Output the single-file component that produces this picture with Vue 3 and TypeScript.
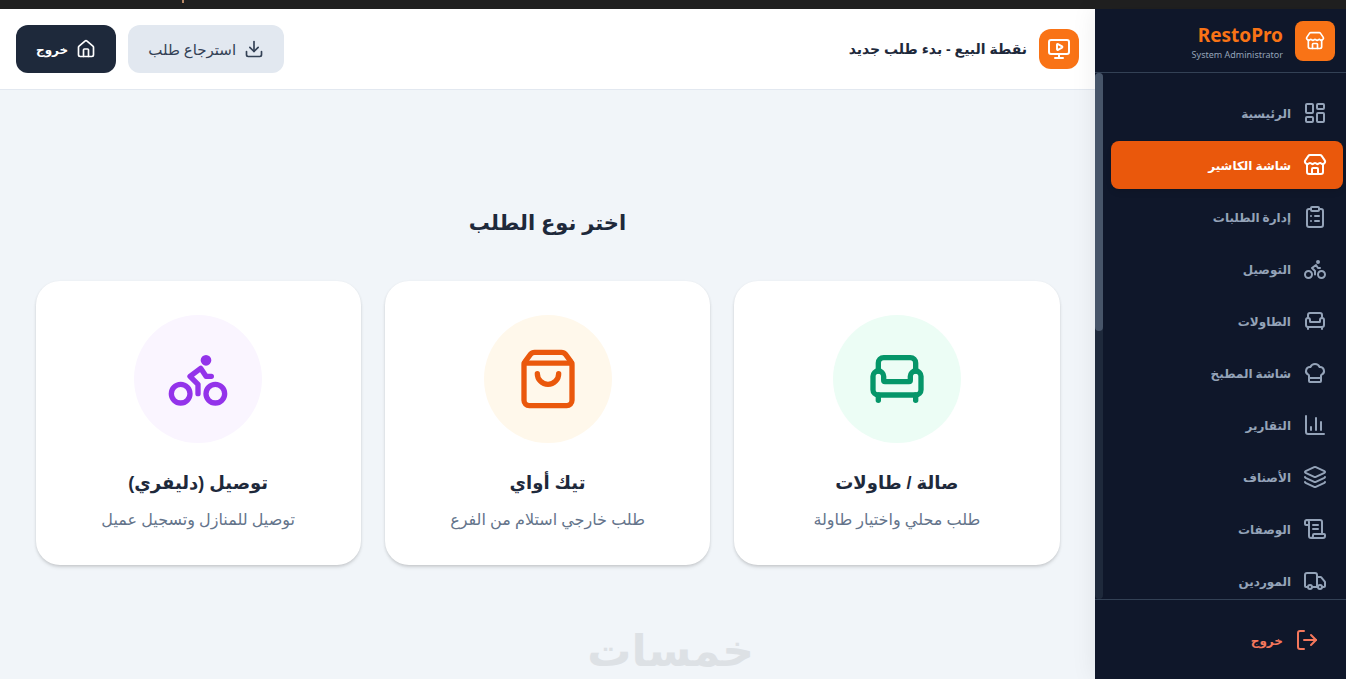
<script setup lang="ts">
interface NavItem {
  label: string
  icon: string
  active?: boolean
}

interface OrderType {
  title: string
  text: string
  icon: string
  tone: string
}

const icons: Record<string, string[]> = {
  dashboard: [
    'M4 3h5a1 1 0 0 1 1 1v7a1 1 0 0 1-1 1H4a1 1 0 0 1-1-1V4a1 1 0 0 1 1-1z',
    'M15 3h5a1 1 0 0 1 1 1v3a1 1 0 0 1-1 1h-5a1 1 0 0 1-1-1V4a1 1 0 0 1 1-1z',
    'M15 12h5a1 1 0 0 1 1 1v7a1 1 0 0 1-1 1h-5a1 1 0 0 1-1-1v-7a1 1 0 0 1 1-1z',
    'M4 16h5a1 1 0 0 1 1 1v3a1 1 0 0 1-1 1H4a1 1 0 0 1-1-1v-3a1 1 0 0 1 1-1z',
  ],
  store: [
    'M15 21v-5a1 1 0 0 0-1-1h-4a1 1 0 0 0-1 1v5',
    'M17.774 10.31a1.12 1.12 0 0 0-1.549 0 2.5 2.5 0 0 1-3.451 0 1.12 1.12 0 0 0-1.548 0 2.5 2.5 0 0 1-3.452 0 1.12 1.12 0 0 0-1.549 0 2.5 2.5 0 0 1-3.77-3.248l2.889-4.184A2 2 0 0 1 7 2h10a2 2 0 0 1 1.653.873l2.895 4.192a2.5 2.5 0 0 1-3.774 3.244',
    'M4 10.95V19a2 2 0 0 0 2 2h12a2 2 0 0 0 2-2v-8.05',
  ],
  clipboard: [
    'M9 2h6a1 1 0 0 1 1 1v2a1 1 0 0 1-1 1H9a1 1 0 0 1-1-1V3a1 1 0 0 1 1-1z',
    'M16 4h2a2 2 0 0 1 2 2v14a2 2 0 0 1-2 2H6a2 2 0 0 1-2-2V6a2 2 0 0 1 2-2h2',
    'M12 11h4', 'M12 16h4', 'M8 11h.01', 'M8 16h.01',
  ],
  bike: [
    'M15 17.5a3.5 3.5 0 1 0 7 0a3.5 3.5 0 1 0-7 0',
    'M2 17.5a3.5 3.5 0 1 0 7 0a3.5 3.5 0 1 0-7 0',
    'M14 5a1 1 0 1 0 2 0a1 1 0 1 0-2 0',
    'M12 17.5V14l-3-3 4-3 2 3h2',
  ],
  armchair: [
    'M19 9V6a2 2 0 0 0-2-2H7a2 2 0 0 0-2 2v3',
    'M3 16a2 2 0 0 0 2 2h14a2 2 0 0 0 2-2v-5a2 2 0 0 0-4 0v1.5a.5.5 0 0 1-.5.5h-9a.5.5 0 0 1-.5-.5V11a2 2 0 0 0-4 0z',
    'M5 18v2', 'M19 18v2',
  ],
  chef: [
    'M17 21a1 1 0 0 0 1-1v-5.35c0-.457.316-.844.727-1.041a4 4 0 0 0-2.134-7.589 5 5 0 0 0-9.186 0 4 4 0 0 0-2.134 7.588c.411.198.727.585.727 1.041V20a1 1 0 0 0 1 1Z',
    'M6 17h12',
  ],
  chart: ['M3 3v16a2 2 0 0 0 2 2h16', 'M18 17V9', 'M13 17V5', 'M8 17v-3'],
  layers: [
    'M12.83 2.18a2 2 0 0 0-1.66 0L2.6 6.08a1 1 0 0 0 0 1.83l8.58 3.91a2 2 0 0 0 1.66 0l8.58-3.9a1 1 0 0 0 0-1.83z',
    'M2 12a1 1 0 0 0 .58.91l8.6 3.91a2 2 0 0 0 1.65 0l8.58-3.9A1 1 0 0 0 22 12',
    'M2 17a1 1 0 0 0 .58.91l8.6 3.91a2 2 0 0 0 1.65 0l8.58-3.9A1 1 0 0 0 22 17',
  ],
  scroll: [
    'M15 12h-5', 'M15 8h-5', 'M19 17V5a2 2 0 0 0-2-2H4',
    'M8 21h12a2 2 0 0 0 2-2v-1a1 1 0 0 0-1-1H11a1 1 0 0 0-1 1v1a2 2 0 1 1-4 0V5a2 2 0 1 0-4 0v2a1 1 0 0 0 1 1h3',
  ],
  truck: [
    'M14 18V6a2 2 0 0 0-2-2H4a2 2 0 0 0-2 2v11a1 1 0 0 0 1 1h2',
    'M15 18H9',
    'M19 18h2a1 1 0 0 0 1-1v-3.65a1 1 0 0 0-.22-.624l-3.48-4.35A1 1 0 0 0 17.52 8H14',
    'M15 18a2 2 0 1 0 4 0a2 2 0 1 0-4 0',
    'M5 18a2 2 0 1 0 4 0a2 2 0 1 0-4 0',
  ],
  house: [
    'M15 21v-8a1 1 0 0 0-1-1h-4a1 1 0 0 0-1 1v8',
    'M3 10a2 2 0 0 1 .709-1.528l7-5.999a2 2 0 0 1 2.582 0l7 5.999A2 2 0 0 1 21 10v9a2 2 0 0 1-2 2H5a2 2 0 0 1-2-2z',
  ],
  download: ['M12 15V3', 'M21 15v4a2 2 0 0 1-2 2H5a2 2 0 0 1-2-2v-4', 'm7 10 5 5 5-5'],
  monitor: [
    'M15.033 9.44a.647.647 0 0 1 0 1.12l-4.065 2.352a.645.645 0 0 1-.968-.56V7.648a.645.645 0 0 1 .967-.56z',
    'M12 17v4', 'M8 21h8',
    'M4 3h16a2 2 0 0 1 2 2v10a2 2 0 0 1-2 2H4a2 2 0 0 1-2-2V5a2 2 0 0 1 2-2z',
  ],
  bag: [
    'M16 10a4 4 0 0 1-8 0',
    'M3.103 6.034h17.794',
    'M3.4 5.467a2 2 0 0 0-.4 1.2V20a2 2 0 0 0 2 2h14a2 2 0 0 0 2-2V6.667a2 2 0 0 0-.4-1.2l-2-2.667A2 2 0 0 0 17 2H7a2 2 0 0 0-1.6.8z',
  ],
  logout: ['m16 17 5-5-5-5', 'M21 12H9', 'M9 21H5a2 2 0 0 1-2-2V5a2 2 0 0 1 2-2h4'],
}

const navItems: NavItem[] = [
  { label: 'الرئيسية', icon: 'dashboard' },
  { label: 'شاشة الكاشير', icon: 'store', active: true },
  { label: 'إدارة الطلبات', icon: 'clipboard' },
  { label: 'التوصيل', icon: 'bike' },
  { label: 'الطاولات', icon: 'armchair' },
  { label: 'شاشة المطبخ', icon: 'chef' },
  { label: 'التقارير', icon: 'chart' },
  { label: 'الأصناف', icon: 'layers' },
  { label: 'الوصفات', icon: 'scroll' },
  { label: 'الموردين', icon: 'truck' },
]

const orderTypes: OrderType[] = [
  { title: 'صالة / طاولات', text: 'طلب محلي واختيار طاولة', icon: 'armchair', tone: 'green' },
  { title: 'تيك أواي', text: 'طلب خارجي استلام من الفرع', icon: 'bag', tone: 'orange' },
  { title: 'توصيل (دليفري)', text: 'توصيل للمنازل وتسجيل عميل', icon: 'bike', tone: 'purple' },
]
</script>

<template>
  <div class="screen" dir="rtl" lang="ar">
    <div class="strip"><span class="strip-mark"></span></div>
    <div class="shell">
      <aside class="sidebar">
        <div class="brand">
          <span class="brand-logo">
            <svg class="icon icon-20" viewBox="0 0 24 24" aria-hidden="true"><path v-for="d in icons.store" :key="d" :d="d" /></svg>
          </span>
          <div class="brand-text">
            <strong class="brand-name">RestoPro</strong>
            <span class="brand-role">System Administrator</span>
          </div>
        </div>
        <div class="nav-wrap">
          <nav class="nav">
            <a v-for="item in navItems" :key="item.label" href="#" class="nav-item" :class="{ active: item.active }">
              <svg class="icon icon-24" viewBox="0 0 24 24" aria-hidden="true"><path v-for="d in icons[item.icon]" :key="d" :d="d" /></svg>
              <span>{{ item.label }}</span>
            </a>
          </nav>
          <div class="track"><div class="thumb"></div></div>
        </div>
        <div class="side-foot">
          <button type="button" class="logout">
            <svg class="icon icon-24" viewBox="0 0 24 24" aria-hidden="true"><path v-for="d in icons.logout" :key="d" :d="d" /></svg>
            <span>خروج</span>
          </button>
        </div>
      </aside>

      <main class="main">
        <header class="topbar">
          <div class="topbar-title">
            <span class="title-logo">
              <svg class="icon icon-24" viewBox="0 0 24 24" aria-hidden="true"><path v-for="d in icons.monitor" :key="d" :d="d" /></svg>
            </span>
            <h1>نقطة البيع - بدء طلب جديد</h1>
          </div>
          <div class="topbar-actions">
            <button type="button" class="btn btn-light">
              <svg class="icon icon-20" viewBox="0 0 24 24" aria-hidden="true"><path v-for="d in icons.download" :key="d" :d="d" /></svg>
              <span>استرجاع طلب</span>
            </button>
            <button type="button" class="btn btn-dark">
              <svg class="icon icon-20" viewBox="0 0 24 24" aria-hidden="true"><path v-for="d in icons.house" :key="d" :d="d" /></svg>
              <span>خروج</span>
            </button>
          </div>
        </header>

        <section class="content">
          <h2>اختر نوع الطلب</h2>
          <div class="cards">
            <button v-for="type in orderTypes" :key="type.title" type="button" class="card">
              <span class="disc" :class="type.tone">
                <svg class="icon icon-64" viewBox="0 0 24 24" aria-hidden="true"><path v-for="d in icons[type.icon]" :key="d" :d="d" /></svg>
              </span>
              <span class="card-title">{{ type.title }}</span>
              <span class="card-text">{{ type.text }}</span>
            </button>
          </div>
          <div class="watermark">خمسات</div>
        </section>
      </main>
    </div>
  </div>
</template>

<style>
html,
body {
  margin: 0;
  overflow: hidden;
}
</style>

<style scoped>
.screen {
  --body: "Noto Sans", "DejaVu Sans", sans-serif;
  --heading: "Liberation Sans", "DejaVu Sans", sans-serif;
  display: flex;
  flex-direction: column;
  height: 100vh;
  overflow: hidden;
  background: #f1f5f9;
  font-family: var(--body);
  color: #1e293b;
}

.screen * {
  box-sizing: border-box;
}

button {
  font-family: inherit;
  border: 0;
  cursor: pointer;
}

.strip {
  flex: none;
  height: 9px;
  background: #202020;
  direction: ltr;
}

.strip-mark {
  display: block;
  width: 2px;
  height: 3px;
  margin-left: 182px;
  background: #b98a68;
}

.shell {
  display: flex;
  flex: 1;
  min-height: 0;
}

.icon {
  flex: none;
  fill: none;
  stroke: currentColor;
  stroke-width: 2;
  stroke-linecap: round;
  stroke-linejoin: round;
}

.icon-20 {
  width: 20px;
  height: 20px;
}

.icon-24 {
  width: 24px;
  height: 24px;
}

.icon-64 {
  width: 64px;
  height: 64px;
}

.sidebar {
  position: relative;
  z-index: 1;
  display: flex;
  flex: none;
  flex-direction: column;
  width: 251px;
  background: #0f172a;
  box-shadow: 0 0 24px rgba(0, 0, 0, 0.08);
}

.brand {
  display: flex;
  align-items: center;
  flex: none;
  gap: 12px;
  height: 64px;
  padding: 0 11px;
  border-bottom: 1px solid #334155;
}

.brand-logo,
.title-logo {
  display: grid;
  place-items: center;
  width: 40px;
  height: 40px;
  border-radius: 8px;
  background: #f97316;
  color: #fff;
}

.title-logo {
  border-radius: 12px;
}

.brand-text {
  display: flex;
  flex-direction: column;
}

.brand-name {
  color: #f97316;
  font-size: 19px;
  line-height: 28px;
}

.brand-role {
  color: #94a3b8;
  font-size: 9px;
  line-height: 12px;
}

.nav-wrap {
  display: flex;
  flex: 1;
  min-height: 0;
}

.nav {
  display: flex;
  flex: 1;
  flex-direction: column;
  gap: 4px;
  padding: 16px 3px 16px 8px;
  overflow: hidden;
}

.nav-item {
  display: flex;
  align-items: center;
  flex: none;
  gap: 12px;
  height: 48px;
  padding: 0 16px;
  border-radius: 8px;
  color: #94a3b8;
  font-size: 12px;
  font-weight: 700;
  text-decoration: none;
}

.nav-item.active {
  background: #ea580c;
  color: #fff;
  box-shadow: 0 4px 6px -1px rgba(0, 0, 0, 0.1);
}

.track {
  flex: none;
  width: 8px;
  border-radius: 4px;
  background: #1e293b;
}

.thumb {
  width: 8px;
  height: 49%;
  border-radius: 4px;
  background: #475569;
}

.side-foot {
  flex: none;
  height: 80px;
  padding: 16px 11px;
  border-top: 1px solid #334155;
}

.logout {
  display: flex;
  align-items: center;
  gap: 12px;
  width: 100%;
  height: 48px;
  padding: 0 16px;
  background: transparent;
  color: #f4775c;
  font-size: 12px;
  font-weight: 700;
}

.main {
  display: flex;
  flex: 1;
  flex-direction: column;
  min-width: 0;
}

.topbar {
  display: flex;
  align-items: center;
  justify-content: space-between;
  flex: none;
  height: 81px;
  padding: 0 16px;
  border-bottom: 1px solid #e2e8f0;
  background: #fff;
}

.topbar-title,
.topbar-actions {
  display: flex;
  align-items: center;
  gap: 12px;
}

h1,
h2 {
  margin: 0;
  font-family: var(--heading);
  font-weight: 700;
}

h1 {
  font-size: 14px;
  line-height: 28px;
}

.btn {
  display: flex;
  align-items: center;
  gap: 8px;
  height: 48px;
  padding: 0 20px;
  border-radius: 12px;
}

.btn-light {
  background: #e2e8f0;
  color: #334155;
  font-size: 15px;
}

.btn-dark {
  background: #1e293b;
  color: #fff;
  font-size: 12px;
  font-weight: 700;
}

.content {
  position: relative;
  display: flex;
  flex: 1;
  flex-direction: column;
  align-items: center;
  justify-content: center;
  padding: 0 24px;
}

h2 {
  margin-bottom: 40px;
  font-size: 21px;
  line-height: 36px;
}

.cards {
  display: grid;
  grid-template-columns: repeat(3, 1fr);
  gap: 24px;
  width: 100%;
  max-width: 1024px;
}

.card {
  display: flex;
  flex-direction: column;
  align-items: center;
  padding: 34px;
  border-radius: 24px;
  background: #fff;
  box-shadow: 0 1px 3px rgba(0, 0, 0, 0.1), 0 3px 4px -1px rgba(0, 0, 0, 0.12);
}

.disc {
  display: grid;
  place-items: center;
  width: 128px;
  height: 128px;
  margin-bottom: 24px;
  border-radius: 50%;
}

.green {
  background: #ecfdf5;
  color: #059669;
}

.orange {
  background: #fff8eb;
  color: #ea580c;
}

.purple {
  background: #faf5ff;
  color: #9333ea;
}

.card-title {
  margin-bottom: 8px;
  color: #1e293b;
  font-family: var(--heading);
  font-size: 18px;
  font-weight: 700;
  line-height: 32px;
}

.card-text {
  color: #64748b;
  font-size: 16px;
  line-height: 24px;
  white-space: nowrap;
}

.watermark {
  position: absolute;
  right: 341px;
  bottom: 0;
  color: #dde1e5;
  font-size: 44px;
  font-weight: 700;
  line-height: 60px;
}
</style>
